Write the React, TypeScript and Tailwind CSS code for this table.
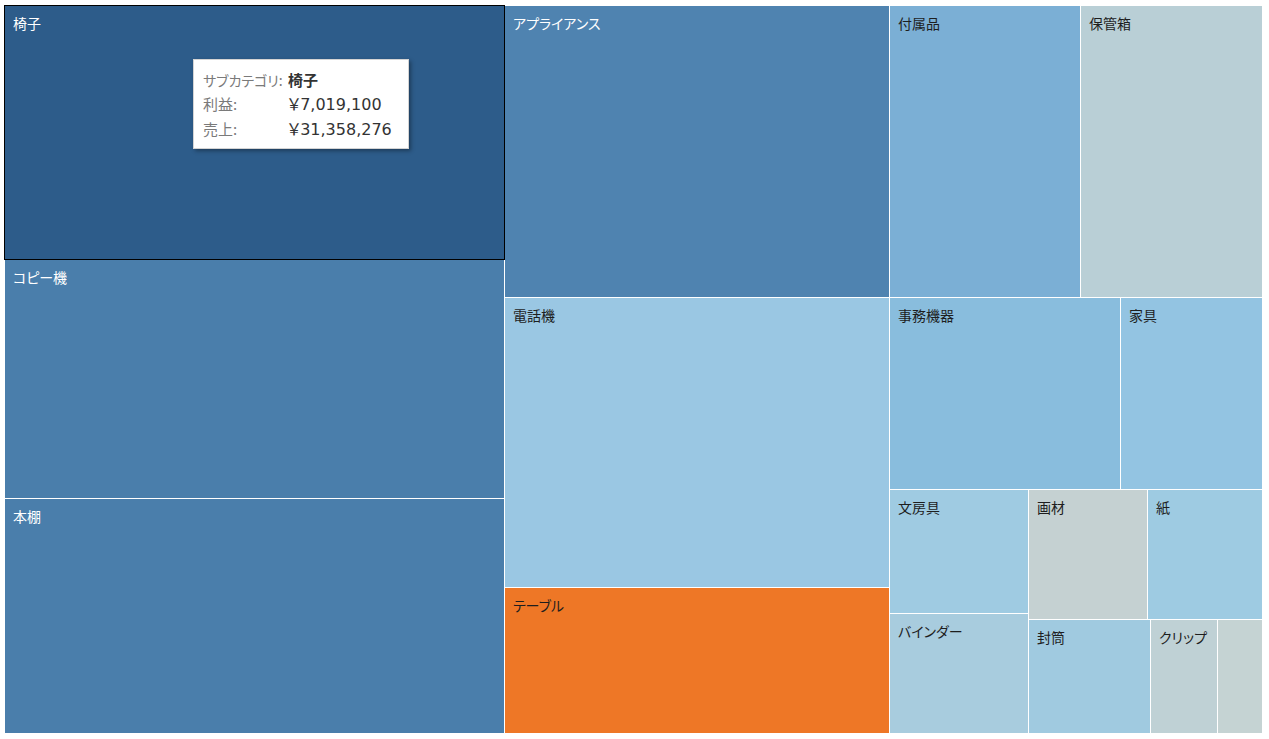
import type { ReactNode } from 'react';

const font = { fontFamily: '"Noto Sans CJK JP", "Liberation Sans", sans-serif' };
const num = { fontFamily: '"DejaVu Sans", "Noto Sans CJK JP", sans-serif' };

function Cell({ label, className, light = true, children }: { label: string; className: string; light?: boolean; children?: ReactNode }) {
    return (
        <div className={`relative shrink-0 pl-2 pt-[7px] text-[14px] leading-[20px] [font-feature-settings:'palt'] ${light ? 'text-[#1e1e1e]' : 'text-white'} ${className}`}>
            {label}
            {children}
        </div>
    );
}

function Tooltip() {
    return (
        <div className="absolute left-[188px] top-[53px] z-20 w-[216px] h-[90px] bg-white border border-[#d4d4d4] shadow-[2px_2px_4px_rgba(0,0,0,0.35)] pl-[9px] pt-[8px] leading-[24px] whitespace-nowrap">
            <div className="flex items-baseline">
                <span className="w-[85px] text-[14px] text-[#7a7a7a]">サブカテゴリ:</span>
                <span className="text-[15px] font-bold text-[#333]">椅子</span>
            </div>
            <div className="flex items-baseline">
                <span className="w-[85px] text-[15px] text-[#7a7a7a]">利益:</span>
                <span className="text-[16px] text-[#333]" style={num}>￥7,019,100</span>
            </div>
            <div className="flex items-baseline">
                <span className="w-[85px] text-[15px] text-[#7a7a7a]">売上:</span>
                <span className="text-[16px] text-[#333]" style={num}>￥31,358,276</span>
            </div>
        </div>
    );
}

export default function App() {
    return (
        <div className="w-[1269px] h-[739px] bg-white pl-[5px] pt-[6px]" style={font}>
            <div className="flex gap-px w-[1257px] h-[727px]">
                {/* left column */}
                <div className="flex flex-col gap-px w-[499px]">
                    <Cell label="椅子" light={false} className="h-[253px] bg-[#2d5c8a]">
                        <div className="pointer-events-none absolute -inset-px border border-black" />
                        <Tooltip />
                    </Cell>
                    <Cell label="コピー機" light={false} className="h-[238px] bg-[#4a7eab]" />
                    <Cell label="本棚" light={false} className="h-[234px] bg-[#4a7eab]" />
                </div>

                {/* middle column */}
                <div className="flex flex-col gap-px w-[384px]">
                    <Cell label="アプライアンス" light={false} className="h-[291px] bg-[#4f83b0]" />
                    <Cell label="電話機" className="h-[289px] bg-[#9ac7e3]" />
                    <Cell label="テーブル" className="h-[145px] bg-[#ee7726]" />
                </div>

                {/* right area */}
                <div className="flex flex-col gap-px w-[372px]">
                    <div className="flex gap-px h-[291px]">
                        <Cell label="付属品" className="w-[190px] bg-[#7bafd5]" />
                        <Cell label="保管箱" className="w-[181px] bg-[#b9cfd6]" />
                    </div>
                    <div className="flex gap-px h-[191px]">
                        <Cell label="事務機器" className="w-[230px] bg-[#89bddd]" />
                        <Cell label="家具" className="w-[141px] bg-[#93c4e2]" />
                    </div>
                    <div className="flex gap-px h-[243px]">
                        <div className="flex flex-col gap-px w-[138px]">
                            <Cell label="文房具" className="h-[123px] bg-[#9fcbe2]" />
                            <Cell label="バインダー" className="h-[119px] bg-[#a8ccde]" />
                        </div>
                        <div className="flex flex-col gap-px w-[233px]">
                            <div className="flex gap-px h-[129px]">
                                <Cell label="画材" className="w-[118px] bg-[#c5d1d2]" />
                                <Cell label="紙" className="w-[114px] bg-[#9ecbe2]" />
                            </div>
                            <div className="flex gap-px h-[113px]">
                                <Cell label="封筒" className="w-[121px] bg-[#a0cae0]" />
                                <Cell label="クリップ" className="w-[66px] bg-[#bfd1d5]" />
                                <Cell label="" className="w-[44px] bg-[#c5d3d3]" />
                            </div>
                        </div>
                    </div>
                </div>
            </div>
        </div>
    );
}
